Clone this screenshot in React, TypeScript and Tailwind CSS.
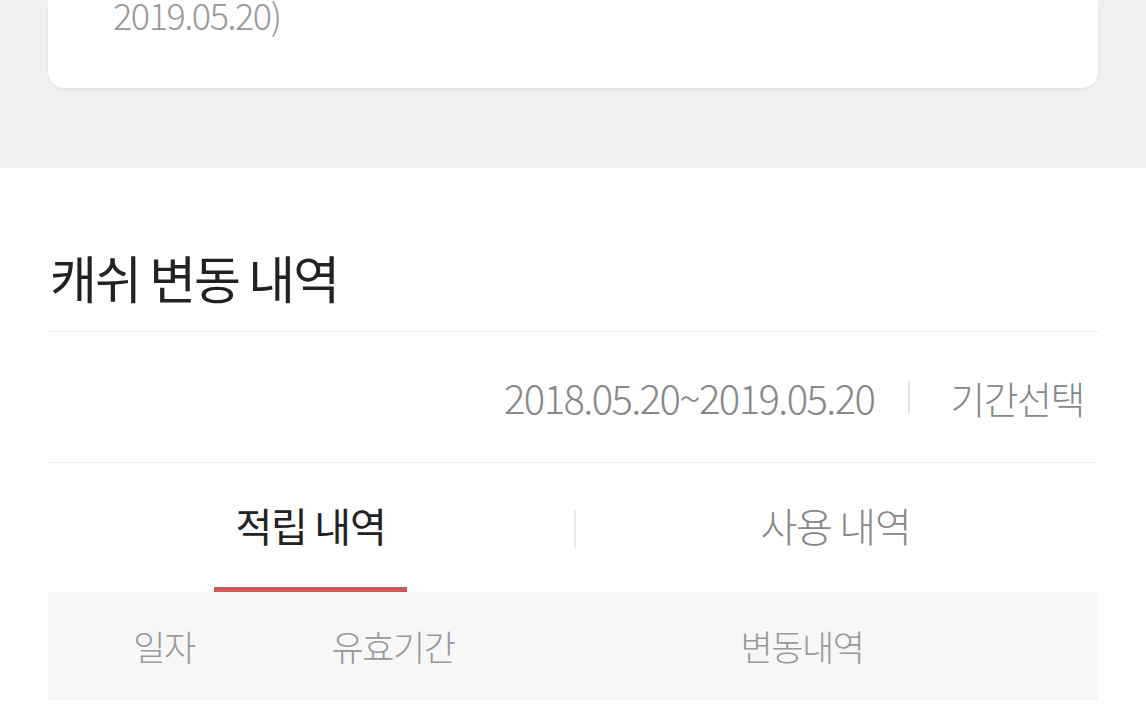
const font = { fontFamily: '"Noto Sans CJK KR", "Noto Sans", sans-serif' };

function Tab({ label, active }: { label: string; active?: boolean }) {
  return (
    <div className="flex-1 flex justify-center">
      <div className="relative flex justify-center w-[193px] h-[129px] pt-[36px]">
        <span className={`text-[40px] leading-[52px] tracking-[-0.03em] ${active ? 'text-[#222]' : 'text-[#888] font-light'}`}>
          {label}
        </span>
        {active && <div className="absolute left-0 right-0 bottom-0 h-[5px] bg-[#d45757]" />}
      </div>
    </div>
  );
}

export default function App() {
  return (
    <div className="w-[1146px] h-[716px] overflow-hidden bg-white" style={font}>
      {/* summary card */}
      <div className="bg-[#f0f0f0] h-[168px] px-[48px]">
        <div className="flex items-start bg-white rounded-b-[16px] h-[88px] shadow-[0_2px_3px_rgba(0,0,0,0.06)] pl-[65px]">
          <div className="text-[36px] leading-[36px] -mt-[4px] text-[#999] font-light tracking-[-0.04em]">2019.05.20)</div>
        </div>
      </div>

      <div className="px-[48px]">
        {/* title */}
        <div className="h-[164px] flex items-end pb-[24px] border-b border-[#ececec]">
          <h2 className="text-[51px] leading-[60px] text-[#222] tracking-[-0.04em] pl-[2px]">캐쉬 변동 내역</h2>
        </div>

        {/* period */}
        <div className="h-[131px] flex items-center justify-end border-b border-[#ececec] pr-[14px] text-[#888] font-light">
          <span className="text-[40px] tracking-[-0.04em]">2018.05.20~2019.05.20</span>
          <span className="w-[2px] h-[32px] bg-[#e2e2e2] ml-[34px] mr-[40px]" />
          <span className="text-[38px] tracking-[-0.04em]">기간선택</span>
        </div>

        {/* tabs */}
        <div className="flex relative">
          <Tab label="적립 내역" active />
          <div className="absolute left-[526px] top-[47px] w-[2px] h-[38px] bg-[#e8e8e8]" />
          <Tab label="사용 내역" />
        </div>

        {/* table header */}
        <div className="flex h-[108px] bg-[#f7f7f7] items-center text-[35px] text-[#999] font-light tracking-[-0.04em]">
          <div className="w-[232px] text-center">일자</div>
          <div className="w-[226px] text-center">유효기간</div>
          <div className="flex-1 text-center">변동내역</div>
        </div>
      </div>
    </div>
  );
}
